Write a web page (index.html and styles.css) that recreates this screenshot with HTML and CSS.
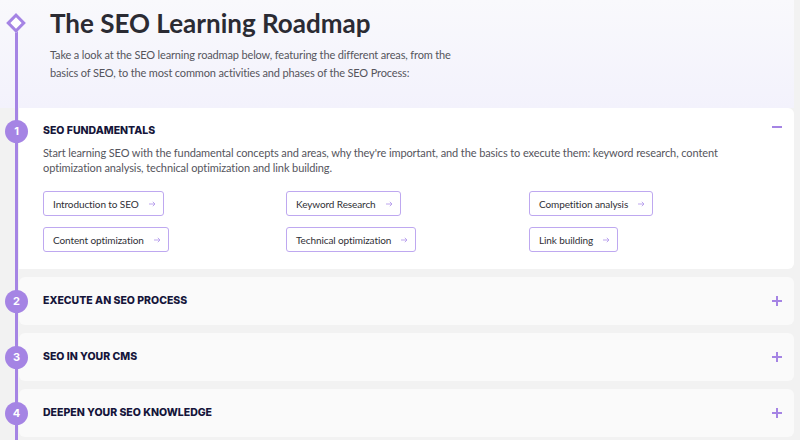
FILE: index.html
```html
<!DOCTYPE html>
<html lang="en">
<head>
<meta charset="utf-8">
<title>The SEO Learning Roadmap</title>
<link rel="stylesheet" href="styles.css">
</head>
<body>
<div class="page">
  <span class="rail-start" aria-hidden="true"></span>
  <header class="intro">
    <h1 class="intro-title">The SEO Learning Roadmap</h1>
    <p class="intro-text">Take a look at the SEO learning roadmap below, featuring the different areas, from the basics of SEO, to the most common activities and phases of the SEO Process:</p>
  </header>

  <section class="steps">
    <article class="step step-open">
      <span class="step-num">1</span>
      <div class="step-head">
        <h2 class="step-title">SEO FUNDAMENTALS</h2>
        <span class="toggle toggle-minus" aria-hidden="true"></span>
      </div>
      <p class="step-desc">Start learning SEO with the fundamental concepts and areas, why they're important, and the basics to execute them: keyword research, content optimization analysis, technical optimization and link building.</p>
      <div class="links">
        <div class="link-cell"><a class="link-btn" href="#">Introduction to SEO <svg class="arrow" viewBox="0 0 7 6" width="7" height="6"><path d="M0 3h6M3.8 0.8 6 3 3.8 5.2" fill="none" stroke="currentColor" stroke-width="0.9"/></svg></a></div>
        <div class="link-cell"><a class="link-btn" href="#">Keyword Research <svg class="arrow" viewBox="0 0 7 6" width="7" height="6"><path d="M0 3h6M3.8 0.8 6 3 3.8 5.2" fill="none" stroke="currentColor" stroke-width="0.9"/></svg></a></div>
        <div class="link-cell"><a class="link-btn" href="#">Competition analysis <svg class="arrow" viewBox="0 0 7 6" width="7" height="6"><path d="M0 3h6M3.8 0.8 6 3 3.8 5.2" fill="none" stroke="currentColor" stroke-width="0.9"/></svg></a></div>
        <div class="link-cell"><a class="link-btn" href="#">Content optimization <svg class="arrow" viewBox="0 0 7 6" width="7" height="6"><path d="M0 3h6M3.8 0.8 6 3 3.8 5.2" fill="none" stroke="currentColor" stroke-width="0.9"/></svg></a></div>
        <div class="link-cell"><a class="link-btn" href="#">Technical optimization <svg class="arrow" viewBox="0 0 7 6" width="7" height="6"><path d="M0 3h6M3.8 0.8 6 3 3.8 5.2" fill="none" stroke="currentColor" stroke-width="0.9"/></svg></a></div>
        <div class="link-cell"><a class="link-btn" href="#">Link building <svg class="arrow" viewBox="0 0 7 6" width="7" height="6"><path d="M0 3h6M3.8 0.8 6 3 3.8 5.2" fill="none" stroke="currentColor" stroke-width="0.9"/></svg></a></div>
      </div>
    </article>

    <article class="step">
      <span class="step-num">2</span>
      <div class="step-head">
        <h2 class="step-title">EXECUTE AN SEO PROCESS</h2>
        <span class="toggle toggle-plus" aria-hidden="true"></span>
      </div>
    </article>

    <article class="step">
      <span class="step-num">3</span>
      <div class="step-head">
        <h2 class="step-title">SEO IN YOUR CMS</h2>
        <span class="toggle toggle-plus" aria-hidden="true"></span>
      </div>
    </article>

    <article class="step">
      <span class="step-num">4</span>
      <div class="step-head">
        <h2 class="step-title">DEEPEN YOUR SEO KNOWLEDGE</h2>
        <span class="toggle toggle-plus" aria-hidden="true"></span>
      </div>
    </article>
  </section>
</div>
</body>
</html>
```

FILE: styles.css
```css
* { box-sizing: border-box; }

html, body {
  margin: 0;
  padding: 0;
}

body {
  background: #f2f2f2;
  font-family: "Lato", "Noto Sans", sans-serif;
  width: 800px;
  height: 440px;
  overflow: hidden;
}

.page {
  position: relative;
  width: 794px;
}

/* timeline rail */
.page::before {
  content: "";
  position: absolute;
  left: 15px;
  top: 30px;
  width: 3px;
  height: 420px;
  background: #a584e4;
  z-index: 2;
}

.rail-start {
  position: absolute;
  left: 9px;
  top: 16px;
  width: 14px;
  height: 14px;
  border: 3px solid #a584e4;
  background: #fff;
  transform: rotate(45deg);
  z-index: 3;
}

.intro {
  height: 108px;
  padding: 6px 0 0 50px;
  background: linear-gradient(#f9f9fc, #f3f2fc);
}

.intro-title {
  margin: 0;
  font-size: 26px;
  line-height: 34px;
  font-weight: 700;
  color: #2b2b33;
}

.intro-text {
  margin: 6px 0 0;
  width: 418px;
  font-size: 11px;
  letter-spacing: -0.15px;
  line-height: 18px;
  color: #55555d;
}

.steps {
  display: flex;
  flex-direction: column;
  gap: 8px;
  margin-left: 19px;
}

.step {
  position: relative;
  background: #fafafa;
  border-radius: 6px;
  padding: 0 24px;
}

.step-open {
  background: #fff;
  border-top-left-radius: 0;
  border-bottom-left-radius: 0;
  padding: 16px 24px 17px;
}

.step-num {
  position: absolute;
  left: -14px;
  top: 13px;
  width: 23px;
  height: 23px;
  border-radius: 50%;
  background: #a584e4;
  color: #fff;
  font-family: "Inter", sans-serif;
  font-size: 11px;
  font-weight: 700;
  line-height: 23px;
  text-align: center;
  z-index: 3;
}

.step-open .step-num {
  top: 12px;
}

.step-head {
  display: flex;
  align-items: center;
  justify-content: space-between;
  height: 48px;
}

.step-open .step-head {
  height: 14px;
}

.step-title {
  margin: 0;
  font-family: "Inter", sans-serif;
  font-size: 10.5px;
  font-weight: 800;
  color: #15153a;
  line-height: 14px;
}

.toggle {
  position: relative;
  width: 10px;
  height: 10px;
  margin-right: -12px;
}

.toggle::before,
.toggle::after {
  content: "";
  position: absolute;
  background: #a584e4;
}

.toggle::before {
  left: 0;
  top: 4px;
  width: 10px;
  height: 1.6px;
}

.toggle-plus::after {
  left: 4.2px;
  top: 0;
  width: 1.6px;
  height: 10px;
}

.toggle-minus {
  top: -4px;
}

.step-desc {
  margin: 7px 0 0;
  width: 690px;
  font-size: 11px;
  letter-spacing: -0.1px;
  line-height: 15px;
  color: #55555d;
}

.links {
  display: grid;
  grid-template-columns: repeat(3, 243px);
  row-gap: 11px;
  margin-top: 16px;
}

.link-cell {
  display: flex;
}

.link-btn {
  display: inline-flex;
  align-items: center;
  gap: 10px;
  height: 25px;
  padding: 0 7px 0 9px;
  border: 1px solid #bea8f0;
  border-radius: 3px;
  font-size: 10px;
  letter-spacing: -0.1px;
  color: #2f2f36;
  text-decoration: none;
}

.arrow {
  color: #b59cec;
  flex: none;
}
```
